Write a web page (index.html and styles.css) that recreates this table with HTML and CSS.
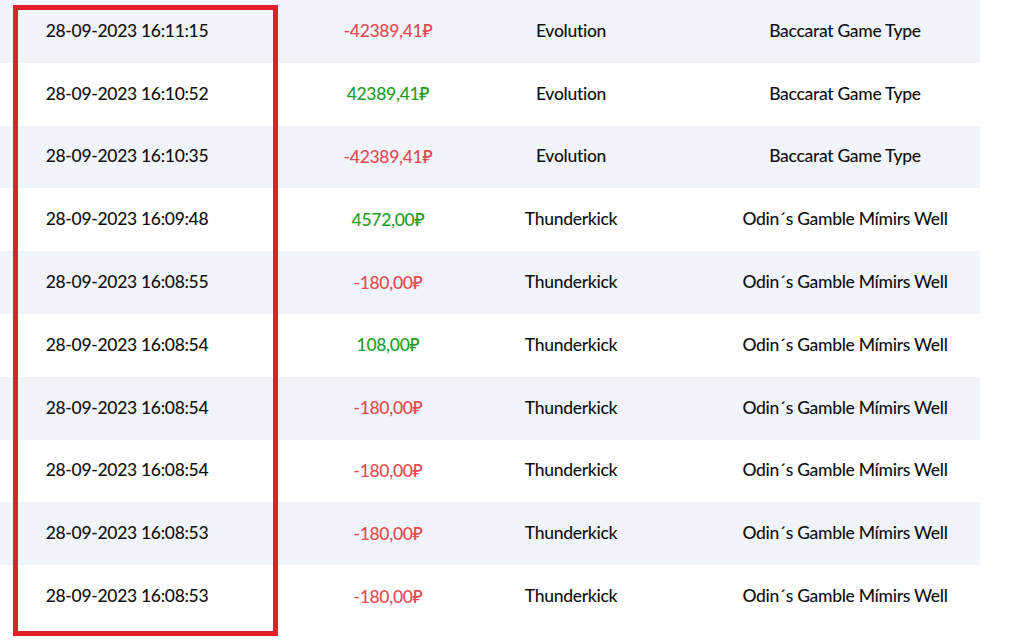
FILE: index.html
```html
<!DOCTYPE html>
<html lang="ru">
<head>
<meta charset="utf-8">
<title>История ставок</title>
<link rel="stylesheet" href="styles.css">
</head>
<body>
<div class="page">
  <div class="table">
    <div class="row"><div class="cell date">28-09-2023 16:11:15</div><div class="cell amount neg">-42389,41₽</div><div class="cell prov">Evolution</div><div class="cell game">Baccarat Game Type</div></div>
    <div class="row"><div class="cell date">28-09-2023 16:10:52</div><div class="cell amount pos">42389,41₽</div><div class="cell prov">Evolution</div><div class="cell game">Baccarat Game Type</div></div>
    <div class="row"><div class="cell date">28-09-2023 16:10:35</div><div class="cell amount neg">-42389,41₽</div><div class="cell prov">Evolution</div><div class="cell game">Baccarat Game Type</div></div>
    <div class="row"><div class="cell date">28-09-2023 16:09:48</div><div class="cell amount pos">4572,00₽</div><div class="cell prov">Thunderkick</div><div class="cell game">Odin´s Gamble Mímirs Well</div></div>
    <div class="row"><div class="cell date">28-09-2023 16:08:55</div><div class="cell amount neg">-180,00₽</div><div class="cell prov">Thunderkick</div><div class="cell game">Odin´s Gamble Mímirs Well</div></div>
    <div class="row"><div class="cell date">28-09-2023 16:08:54</div><div class="cell amount pos">108,00₽</div><div class="cell prov">Thunderkick</div><div class="cell game">Odin´s Gamble Mímirs Well</div></div>
    <div class="row"><div class="cell date">28-09-2023 16:08:54</div><div class="cell amount neg">-180,00₽</div><div class="cell prov">Thunderkick</div><div class="cell game">Odin´s Gamble Mímirs Well</div></div>
    <div class="row"><div class="cell date">28-09-2023 16:08:54</div><div class="cell amount neg">-180,00₽</div><div class="cell prov">Thunderkick</div><div class="cell game">Odin´s Gamble Mímirs Well</div></div>
    <div class="row"><div class="cell date">28-09-2023 16:08:53</div><div class="cell amount neg">-180,00₽</div><div class="cell prov">Thunderkick</div><div class="cell game">Odin´s Gamble Mímirs Well</div></div>
    <div class="row"><div class="cell date">28-09-2023 16:08:53</div><div class="cell amount neg">-180,00₽</div><div class="cell prov">Thunderkick</div><div class="cell game">Odin´s Gamble Mímirs Well</div></div>
  </div>
  <div class="highlight"></div>
</div>
</body>
</html>
```

FILE: styles.css
```css
* { box-sizing: border-box; }
html, body {
  margin: 0;
  padding: 0;
  background: #ffffff;
}
body {
  font-family: "Lato", "Noto Sans", sans-serif;
  font-size: 17.5px;
  font-weight: 500;
  color: #111111;
}
.page {
  position: relative;
  width: 1021px;
  height: 644px;
  overflow: hidden;
}
.table {
  width: 980px;
  display: grid;
  grid-auto-rows: 62.8px;
}
.row {
  display: grid;
  grid-template-columns: 254px 268px 98px 360px;
  align-items: center;
  padding-bottom: 2px;
}
.row:nth-child(odd) {
  background: #f1f4fb;
}
.cell {
  text-align: center;
  white-space: nowrap;
  letter-spacing: -0.3px;
}
.cell.game {
  padding-left: 90px;
}
.amount.neg { color: #e84a4f; }
.amount.pos { color: #1f9d27; }
.highlight {
  position: absolute;
  left: 13px;
  top: 5px;
  width: 265px;
  height: 631px;
  border: 5px solid #e3202a;
  pointer-events: none;
}
```
